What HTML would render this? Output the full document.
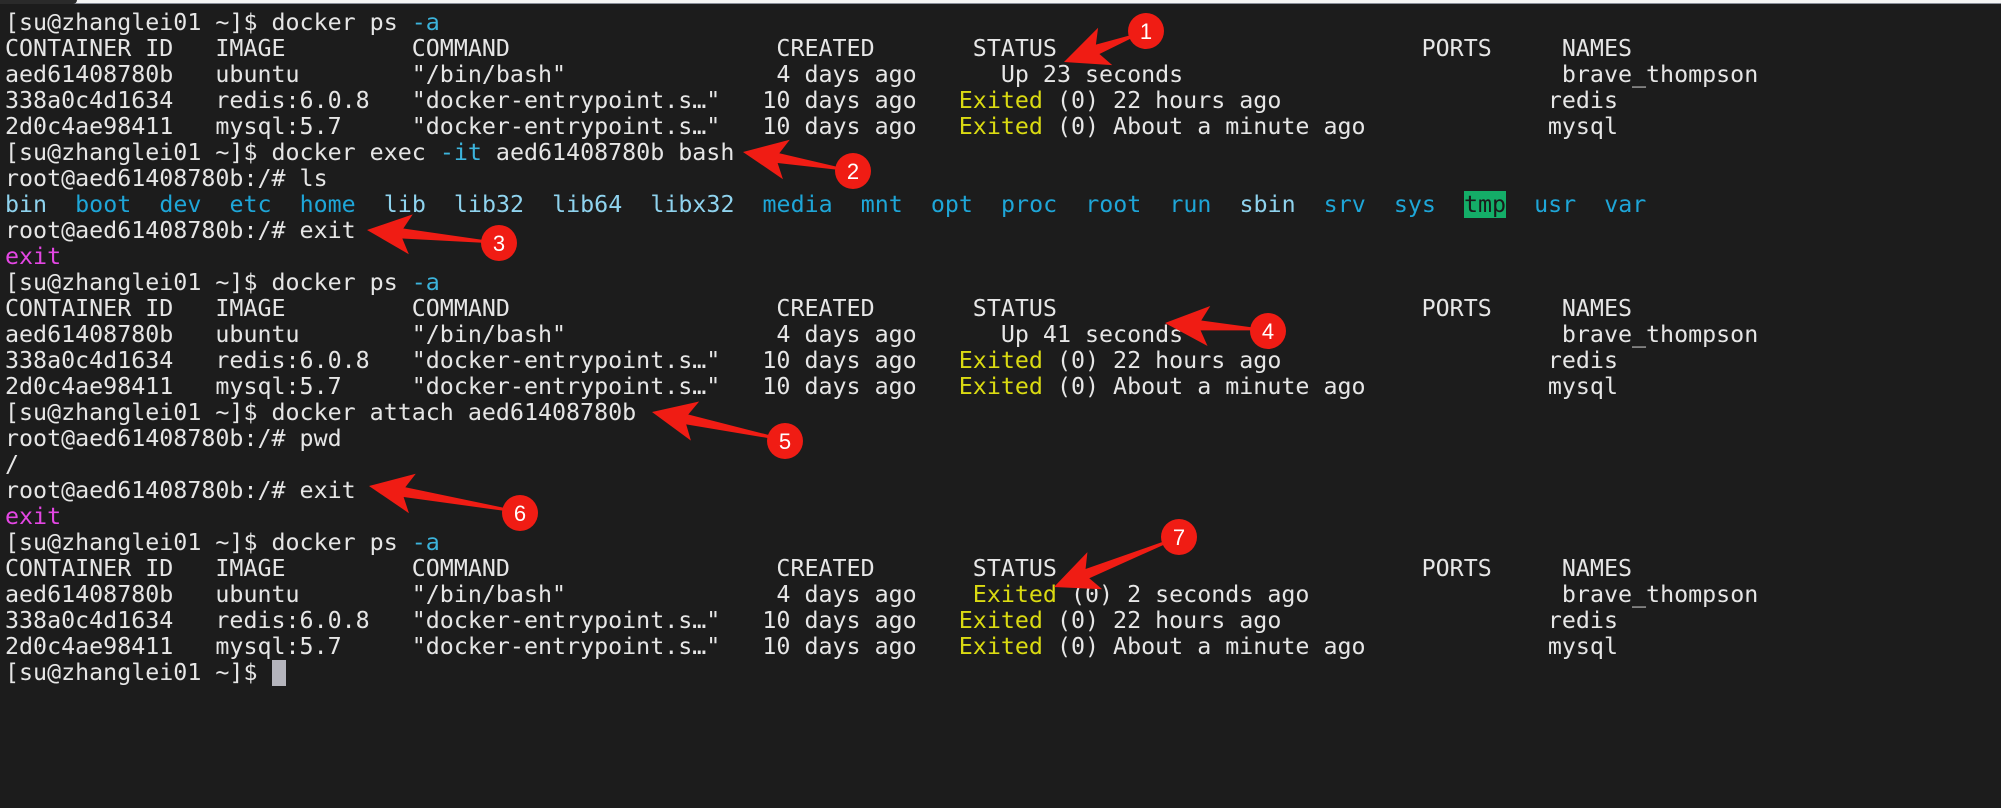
<!DOCTYPE html>
<html><head><meta charset="utf-8"><style>
html,body{margin:0;padding:0;width:2001px;height:808px;overflow:hidden;background:#1c1c1c}
.top{position:absolute;left:0;top:0;width:2001px;height:3px;background:#f4f4f4;border-bottom:1px solid #8a8f99}
.tab{position:absolute;left:0;top:0;width:77px;height:4px;background:#2a2a2a;border-bottom-right-radius:4px}
pre{position:absolute;left:5px;top:10px;margin:0;font-family:"DejaVu Sans Mono","Liberation Mono",monospace;font-size:23.3px;line-height:26px;color:#e6e6e6;white-space:pre}
.c{color:#3cb4dc}.y{color:#dada12}.m{color:#e446e4}
.d{color:#1ea6d8}.l{color:#8fd3ee}.t{background:#14ad68;color:#1a1a1a}
.cur{display:inline-block;width:14px;height:26px;background:#b4b4bc;vertical-align:top}
svg{position:absolute;left:0;top:0}
</style></head><body>
<div class="top"></div><div class="tab"></div>
<pre>[su@zhanglei01 ~]$ docker ps <span class="c">-a</span>
CONTAINER ID   IMAGE         COMMAND                   CREATED       STATUS                          PORTS     NAMES
aed61408780b   ubuntu        "/bin/bash"               4 days ago      Up 23 seconds                           brave_thompson
338a0c4d1634   redis:6.0.8   "docker-entrypoint.s…"   10 days ago   <span class="y">Exited</span> (0) 22 hours ago                   redis
2d0c4ae98411   mysql:5.7     "docker-entrypoint.s…"   10 days ago   <span class="y">Exited</span> (0) About a minute ago             mysql
[su@zhanglei01 ~]$ docker exec <span class="c">-it</span> aed61408780b bash
root@aed61408780b:/# ls
<span class="l">bin</span>  <span class="d">boot</span>  <span class="d">dev</span>  <span class="d">etc</span>  <span class="d">home</span>  <span class="l">lib</span>  <span class="l">lib32</span>  <span class="l">lib64</span>  <span class="l">libx32</span>  <span class="d">media</span>  <span class="d">mnt</span>  <span class="d">opt</span>  <span class="d">proc</span>  <span class="d">root</span>  <span class="d">run</span>  <span class="l">sbin</span>  <span class="d">srv</span>  <span class="d">sys</span>  <span class="t">tmp</span>  <span class="d">usr</span>  <span class="d">var</span>
root@aed61408780b:/# exit
<span class="m">exit</span>
[su@zhanglei01 ~]$ docker ps <span class="c">-a</span>
CONTAINER ID   IMAGE         COMMAND                   CREATED       STATUS                          PORTS     NAMES
aed61408780b   ubuntu        "/bin/bash"               4 days ago      Up 41 seconds                           brave_thompson
338a0c4d1634   redis:6.0.8   "docker-entrypoint.s…"   10 days ago   <span class="y">Exited</span> (0) 22 hours ago                   redis
2d0c4ae98411   mysql:5.7     "docker-entrypoint.s…"   10 days ago   <span class="y">Exited</span> (0) About a minute ago             mysql
[su@zhanglei01 ~]$ docker attach aed61408780b
root@aed61408780b:/# pwd
/
root@aed61408780b:/# exit
<span class="m">exit</span>
[su@zhanglei01 ~]$ docker ps <span class="c">-a</span>
CONTAINER ID   IMAGE         COMMAND                   CREATED       STATUS                          PORTS     NAMES
aed61408780b   ubuntu        "/bin/bash"               4 days ago    <span class="y">Exited</span> (0) 2 seconds ago                  brave_thompson
338a0c4d1634   redis:6.0.8   "docker-entrypoint.s…"   10 days ago   <span class="y">Exited</span> (0) 22 hours ago                   redis
2d0c4ae98411   mysql:5.7     "docker-entrypoint.s…"   10 days ago   <span class="y">Exited</span> (0) About a minute ago             mysql
[su@zhanglei01 ~]$ <span class="cur"></span></pre>
<svg width="2001" height="808" viewBox="0 0 2001 808">
<g fill="#f01c14">
<polygon transform="translate(1064,62) rotate(-20.7)" points="0,0 44,-20 36,-5 72,-1.5 72,1.5 36,5 44,20"/>
<polygon transform="translate(743,152) rotate(9.8)" points="0,0 44,-20 36,-5 95,-1.5 95,1.5 36,5 44,20"/>
<polygon transform="translate(367,230) rotate(5.6)" points="0,0 44,-20 36,-5 116,-1.5 116,1.5 36,5 44,20"/>
<polygon transform="translate(1165,323) rotate(3.9)" points="0,0 44,-20 36,-5 87,-1.5 87,1.5 36,5 44,20"/>
<polygon transform="translate(652,412) rotate(11.9)" points="0,0 44,-20 36,-5 120,-1.5 120,1.5 36,5 44,20"/>
<polygon transform="translate(369,486) rotate(9.8)" points="0,0 44,-20 36,-5 137,-1.5 137,1.5 36,5 44,20"/>
<polygon transform="translate(1054,587) rotate(-21.8)" points="0,0 44,-20 36,-5 118,-1.5 118,1.5 36,5 44,20"/>
<circle cx="1146" cy="31" r="18"/><circle cx="853" cy="171" r="18"/><circle cx="499" cy="243" r="18"/>
<circle cx="1268" cy="331" r="18"/><circle cx="785" cy="441" r="18"/><circle cx="520" cy="513" r="18"/><circle cx="1179" cy="537" r="18"/>
</g>
<g fill="#fff" font-family="Liberation Sans, sans-serif" font-size="22" text-anchor="middle">
<text x="1146" y="39">1</text><text x="853" y="179">2</text><text x="499" y="251">3</text>
<text x="1268" y="339">4</text><text x="785" y="449">5</text><text x="520" y="521">6</text><text x="1179" y="545">7</text>
</g>
</svg>
</body></html>
